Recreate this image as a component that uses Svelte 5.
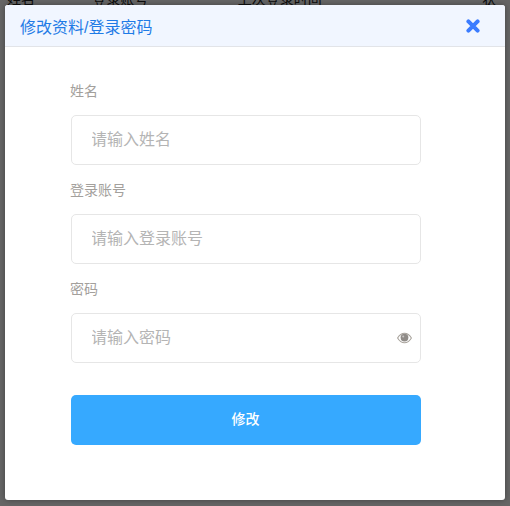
<script lang="ts">
  const fields = [
    { label: "姓名", placeholder: "请输入姓名", type: "text" },
    { label: "登录账号", placeholder: "请输入登录账号", type: "text" },
    { label: "密码", placeholder: "请输入密码", type: "password" }
  ];
</script>

<div class="page">
  <div class="table-head">
    <span class="c1">姓名</span>
    <span class="c2">登录账号</span>
    <span class="c3">上次登录时间</span>
    <span class="c4">状态</span>
  </div>

  <div class="overlay">
    <div class="dialog">
      <header class="dialog-head">
        <h2>修改资料/登录密码</h2>
        <button type="button" class="close" aria-label="关闭">
          <svg width="14" height="14" viewBox="0 0 14 14">
            <path d="M2.4 2.4 L11.6 11.6 M11.6 2.4 L2.4 11.6" stroke="#3b7cff" stroke-width="4" stroke-linecap="round" fill="none" />
          </svg>
        </button>
      </header>

      <form class="form" onsubmit={(event) => event.preventDefault()}>
        {#each fields as field}
          <div class="field">
            <label for={field.label}>{field.label}</label>
            <div class="input-wrap">
              <input id={field.label} type={field.type} placeholder={field.placeholder} />
              {#if field.type === "password"}
                <svg class="eye" width="15" height="12" viewBox="0 0 15 12">
                  <path d="M0.6 6 C2.6 2.6 5 1.2 7.5 1.2 C10 1.2 12.4 2.6 14.4 6 C12.4 9.4 10 10.8 7.5 10.8 C5 10.8 2.6 9.4 0.6 6 Z" fill="none" stroke="#a8a39c" stroke-width="1.1" />
                  <circle cx="7.5" cy="5.6" r="3.9" fill="#8f8b87" />
                  <circle cx="6.2" cy="4.4" r="1" fill="#c9c7c5" />
                </svg>
              {/if}
            </div>
          </div>
        {/each}

        <button type="submit" class="submit">修改</button>
      </form>
    </div>
  </div>
</div>

<style>
:global(body) {
  margin: 0;
  font-family: "Liberation Sans", "Noto Sans CJK SC", sans-serif;
}

.page {
  position: relative;
  width: 510px;
  height: 506px;
  overflow: hidden;
  background: #fff;
}

.table-head {
  display: flex;
  height: 12px;
  margin-top: -7px;
  font-size: 14px;
  line-height: 12px;
  color: #222;
}

.c1 { margin-left: 7px; width: 86px; }
.c2 { width: 147px; }
.c3 { width: 247px; }

.overlay {
  position: absolute;
  inset: 0;
  padding: 5px;
  background: rgba(0, 0, 0, 0.6);
}

.dialog {
  width: 500px;
  height: 495px;
  overflow: hidden;
  border-radius: 3px;
  background: #fff;
  box-shadow: 0 0 6px rgba(0, 0, 0, 0.35);
}

.dialog-head {
  display: flex;
  align-items: center;
  justify-content: space-between;
  height: 41px;
  padding: 0 25px 0 15px;
  background: #f1f6ff;
  border-bottom: 1px solid #e2e4e8;
}

.dialog-head h2 {
  margin: 0;
  font-size: 16px;
  font-weight: 400;
  color: #1f7be6;
}

.close {
  display: flex;
  padding: 0;
  border: 0;
  background: transparent;
  cursor: pointer;
}

.form {
  display: flex;
  flex-direction: column;
  width: 350px;
  margin-left: 66px;
  padding-top: 35px;
}

.field {
  display: flex;
  flex-direction: column;
  gap: 15px;
  height: 99px;
}

label {
  font-size: 14px;
  line-height: 18px;
  margin-left: -1px;
  color: #a3a09c;
}

.input-wrap {
  position: relative;
}

input {
  display: block;
  box-sizing: border-box;
  width: 100%;
  height: 50px;
  padding: 0 19px 0 20px;
  text-indent: -1px;
  border: 1px solid #e6e6e6;
  border-radius: 5px;
  font: inherit;
  font-size: 16px;
  outline: none;
}

input::placeholder {
  color: #b4b4b4;
  opacity: 1;
}

.eye {
  position: absolute;
  top: 19px;
  right: 9px;
}

.submit {
  height: 50px;
  margin-top: 16px;
  border: 0;
  border-radius: 5px;
  background: #36a9ff;
  color: #fff;
  font: inherit;
  font-size: 14px;
  font-weight: 500;
  line-height: 48px;
  padding: 0 1px 2px 0;
  cursor: pointer;
}
</style>
